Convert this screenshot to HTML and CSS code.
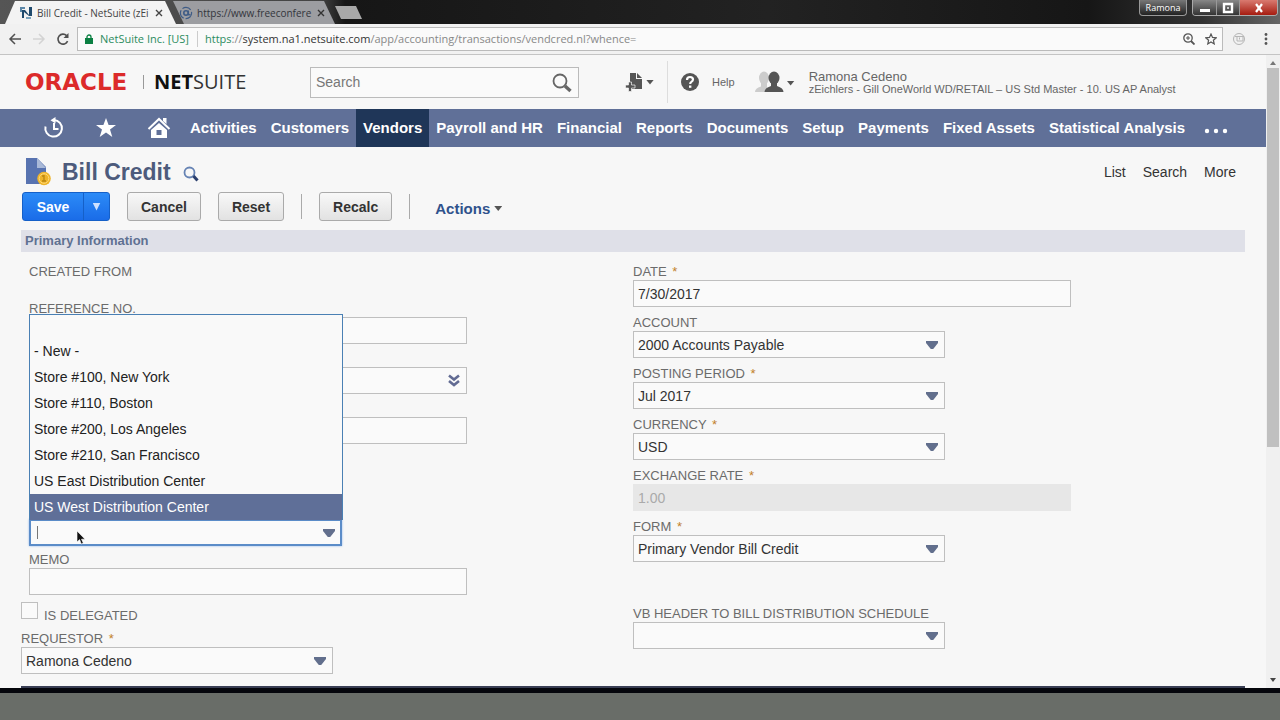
FILE: index.html
```
<!DOCTYPE html>
<html lang="en">
<head>
<meta charset="utf-8">
<title>Bill Credit - NetSuite</title>
<link rel="stylesheet" href="styles.css">
</head>
<body>
<div class="tabstrip">
  <div class="tab tab-active">
    <svg class="favicon" width="14" height="14" viewBox="0 0 14 14"><path fill="#5b87a8" d="M1 1h5v2H3v3H1z"/><path fill="#1f4a6d" d="M3 4h3l4 5V1h3v9h-3L5 6v6H3z"/><path fill="#7ba3bd" d="M7 11h5v2H7z"/></svg>
    <span class="tab-title">Bill Credit - NetSuite (zEi</span>
    <button class="tab-close" aria-label="Close tab"><svg width="8" height="8" viewBox="0 0 8 8"><path d="M1 1l6 6M7 1L1 7" stroke="#444" stroke-width="1.4"/></svg></button>
  </div>
  <div class="tab tab-idle">
    <svg class="favicon" width="14" height="14" viewBox="0 0 14 14" fill="none" stroke="#3e5c86"><circle cx="7" cy="7" r="5.6" stroke-dasharray="9 2" stroke-width="1.2"/><circle cx="7" cy="7" r="2.2" stroke-width="1.6"/><path d="M9.4 4.5v4q1 1 1.8-.5" stroke-width="1.3"/></svg>
    <span class="tab-title">https://www.freeconfere</span>
    <button class="tab-close" aria-label="Close tab"><svg width="8" height="8" viewBox="0 0 8 8"><path d="M1 1l6 6M7 1L1 7" stroke="#333" stroke-width="1.4"/></svg></button>
  </div>
  <button class="new-tab" aria-label="New tab"></button>
  <div class="window-controls">
    <button class="user-chip">Ramona</button>
    <div class="win-group">
      <button class="win-btn" aria-label="Minimize"><svg width="12" height="12" viewBox="0 0 12 12"><path fill="#fff" d="M1 7h10v3H1z"/></svg></button>
      <button class="win-btn" aria-label="Restore"><svg width="12" height="12" viewBox="0 0 12 12"><path d="M2 2h8v8H2z" fill="none" stroke="#fff" stroke-width="2.4"/><path fill="#ccc" d="M5 5h2v2H5z"/></svg></button>
      <button class="win-btn win-close" aria-label="Close"><svg width="12" height="12" viewBox="0 0 12 12"><path d="M3 2l6 8M9 2L3 10" stroke="#fff" stroke-width="2.2"/></svg></button>
    </div>
  </div>
</div>

<div class="toolbar">
  <button class="tool" aria-label="Back"><svg width="14" height="14" viewBox="0 0 14 14" fill="none" stroke="#505050" stroke-width="1.5"><path d="M13 7H2M7 2L2 7l5 5"/></svg></button>
  <button class="tool" aria-label="Forward"><svg width="14" height="14" viewBox="0 0 14 14" fill="none" stroke="#d3d3d3" stroke-width="1.5"><path d="M1 7h11M7 2l5 5-5 5"/></svg></button>
  <button class="tool" aria-label="Reload"><svg width="14" height="14" viewBox="0 0 14 14" fill="none" stroke="#505050" stroke-width="1.6"><path d="M11.6 9.2A5 5 0 1 1 10.6 3.6"/><path fill="#505050" stroke="none" d="M12.5 1v5h-5z"/></svg></button>
  <div class="omnibox">
    <svg width="8" height="11" viewBox="0 0 8 11"><rect y="4" width="8" height="6" fill="#0b8043"/><path d="M2 4.500V3a2 2 0 0 1 4 0v1.500" fill="none" stroke="#0b8043" stroke-width="1.300"/></svg>
    <span class="site">NetSuite Inc. [US]</span>
    <span class="url"><span class="scheme">https</span>://<span class="host">system.na1.netsuite.com</span>/app/accounting/transactions/vendcred.nl?whence=</span>
    <svg width="12" height="12" viewBox="0 0 12 12" fill="none" stroke="#555"><circle cx="5" cy="5" r="4.200" stroke-width="1.300"/><path d="M8 8l3.500 3.500" stroke-width="1.800"/><path d="M3 5h4M5 3v4"/></svg>
    <svg class="bookmark" width="12" height="12" viewBox="0 0 12 12"><path d="M6 1l1.500 3.400 3.700.4-2.800 2.400.8 3.700L6 9l-3.200 1.900.8-3.700L.8 4.800l3.700-.4z" fill="none" stroke="#555" stroke-width="1.200"/></svg>
  </div>
  <svg class="extension" width="14" height="14" viewBox="0 0 14 14" fill="none" stroke="#b5b5b5"><circle cx="7" cy="7" r="5.500"/><path d="M3 4.500h9M5 5v4h6V5M7.500 5.500v2"/></svg>
  <button class="tool" aria-label="Menu"><svg width="4" height="14" viewBox="0 0 4 14" fill="#555"><circle cx="2" cy="2.500" r="1.400"/><circle cx="2" cy="7" r="1.400"/><circle cx="2" cy="11.500" r="1.400"/></svg></button>
</div>

<div class="viewport">
  <div class="page">
    <header class="header">
      <div class="logo"><span class="oracle">ORACLE</span><span class="logo-sep"></span><span class="netsuite"><b>NET</b>SUITE</span></div>
      <div class="search">
        <input type="text" placeholder="Search" aria-label="Search">
        <svg width="22" height="22" viewBox="0 0 22 22" fill="none" stroke="#666"><circle cx="9" cy="9" r="6.500" stroke-width="1.800"/><path d="M14 14l5.500 5" stroke-width="3.400"/></svg>
      </div>
      <button class="create" aria-label="Create new">
        <svg width="18" height="20" viewBox="0 0 18 20" fill="#555"><path d="M5 1h6v6h6v10H5z"/><path d="M12 1l5 5h-5z"/><path d="M3.500 10h3v3H10v3H6.500v3.500h-3V16H.500v-3h3z" stroke="#f7f7f7" stroke-width=".7"/></svg>
        <span class="caret"></span>
      </button>
      <a class="help" href="#">
        <svg width="20" height="20" viewBox="0 0 20 20"><circle cx="10" cy="10" r="9" fill="#555"/><path d="M7 8q0-3 3-3t3 2.600q0 1.400-1.600 2.300-1.200.7-1.200 2" fill="none" stroke="#fff" stroke-width="2.200"/><path fill="#fff" d="M9 13.500h2.400v2.300H9z"/></svg>
        Help
      </a>
      <button class="user">
        <svg width="29" height="22" viewBox="0 0 29 22"><g fill="#ccc"><ellipse cx="9" cy="7" rx="5" ry="6.500"/><path d="M0 21q0-4 6-5.500V11h6v5l3 5z"/></g><g fill="#555"><ellipse cx="19" cy="7" rx="5.500" ry="6.500"/><path d="M9.500 21q0-4 6.500-6v-4h6v4q6.500 2 6.500 6z"/></g></svg>
        <span class="caret"></span>
        <span class="who"><span class="name">Ramona Cedeno</span><span class="role">zEichlers - Gill OneWorld WD/RETAIL – US Std Master - 10. US AP Analyst</span></span>
      </button>
    </header>

    <nav class="nav">
      <a class="nav-icon" href="#" aria-label="Recent"><svg width="22" height="22" viewBox="0 0 22 22" fill="none" stroke="#fff" stroke-width="2"><path d="M2.500 9.500A8.300 8.300 0 1 0 11 3"/><path d="M11 6v6h4.500"/><path fill="#fff" stroke="none" d="M12.500 0v6.500L7.500 3.200z"/></svg></a>
      <a class="nav-icon" href="#" aria-label="Shortcuts"><svg width="22" height="22" viewBox="0 0 22 22"><path fill="#fff" d="M11 1l2.600 7H21l-6 4.500 2.300 7.500L11 15.500 4.700 20 7 12.500 1 8h7.400z"/></svg></a>
      <a class="nav-icon" href="#" aria-label="Home"><svg width="24" height="22" viewBox="0 0 24 22"><path d="M1.500 12L12 2l10.500 10" fill="none" stroke="#fff" stroke-width="2"/><path fill="#fff" d="M16 1h3.500v6L16 4zM12 6l8 7v8H4v-8z"/><path fill="#607098" d="M9.500 13h5v5h-5z"/></svg></a>
      <a href="#">Activities</a><a href="#">Customers</a><a class="current" href="#">Vendors</a><a href="#">Payroll and HR</a><a href="#">Financial</a><a href="#">Reports</a><a href="#">Documents</a><a href="#">Setup</a><a href="#">Payments</a><a href="#">Fixed Assets</a><a href="#">Statistical Analysis</a>
      <a class="more" href="#" aria-label="More tabs"><svg width="24" height="6" viewBox="0 0 24 6" fill="#fff"><circle cx="3" cy="3" r="2.200"/><circle cx="12" cy="3" r="2.200"/><circle cx="21" cy="3" r="2.200"/></svg></a>
    </nav>

    <main class="main">
      <div class="title-row">
        <svg width="27" height="29" viewBox="0 0 27 29"><path fill="#5873b0" d="M1 1h11l9 9v17H1z"/><path fill="#a9b9d8" d="M12 1l9 10h-9z"/><circle cx="19" cy="21.500" r="6.800" fill="#eeb42a"/><circle cx="19" cy="21.500" r="4.800" fill="none" stroke="#ffd978"/><path d="M19 18v6M17 19h2M17 24h4" stroke="#b98512" stroke-width="1.300"/></svg>
        <h1>Bill Credit</h1>
        <svg class="title-search" width="16" height="16" viewBox="0 0 16 16" fill="none"><circle cx="6.500" cy="6.500" r="5" stroke="#6683b4" stroke-width="1.800"/><path d="M10.500 10l4 4.500" stroke="#2b3f6d" stroke-width="3"/></svg>
        <div class="page-links"><a href="#">List</a><a href="#">Search</a><a href="#">More</a></div>
      </div>

      <div class="actions">
        <div class="split"><button class="save">Save</button><button class="save-more" aria-label="More save options"><span class="save-caret"></span></button></div>
        <button class="btn">Cancel</button>
        <button class="btn">Reset</button>
        <span class="rule"></span>
        <button class="btn">Recalc</button>
        <span class="rule"></span>
        <button class="action-menu">Actions <span class="caret"></span></button>
      </div>

      <h2 class="section">Primary Information</h2>

      <form class="form">
        <div class="col-left">
          <div class="group">
            <div class="label created">CREATED FROM</div>
            <div class="field"><label class="label" for="ref">REFERENCE NO.</label><input id="ref" class="box" type="text"></div>
            <div class="field unlabelled picker"><input class="box" type="text" aria-label="Vendor"><svg class="chevrons" width="12" height="13" viewBox="0 0 12 13" fill="none" stroke="#626b93" stroke-width="2.600"><path d="M1 1.500l5 4 5-4M1 7l5 4 5-4"/></svg></div>
            <div class="field unlabelled"><input class="box" type="text" aria-label="Amount"></div>
            <div class="combo">
              <ul class="options" role="listbox">
                <li class="blank" role="option"></li>
                <li role="option">- New -</li>
                <li role="option">Store #100, New York</li>
                <li role="option">Store #110, Boston</li>
                <li role="option">Store #200, Los Angeles</li>
                <li role="option">Store #210, San Francisco</li>
                <li role="option">US East Distribution Center</li>
                <li class="selected" role="option" aria-selected="true">US West Distribution Center</li>
              </ul>
              <div class="arrow"><input class="box focused" type="text" role="combobox" aria-expanded="true" aria-label="Location"></div>
              <span class="text-caret"></span>
              <svg class="pointer" width="10" height="16" viewBox="0 0 10 16"><path d="M1 1v11l2.600-2.400L5.300 14l2-1-1.800-3.800H9z" fill="#111" stroke="#fff" stroke-width=".6"/></svg>
            </div>
            <div class="field"><label class="label" for="memo">MEMO</label><input id="memo" class="box" type="text"></div>
          </div>
          <div class="check"><input id="delegated" type="checkbox"><label class="label" for="delegated">IS DELEGATED</label></div>
          <div class="field narrow"><label class="label" for="req">REQUESTOR <span class="star">*</span></label><div class="arrow"><select id="req" class="box"><option>Ramona Cedeno</option></select></div></div>
        </div>
        <div class="col-right">
          <div class="field"><label class="label" for="date">DATE <span class="star">*</span></label><input id="date" class="box" type="text" value="7/30/2017"></div>
          <div class="field narrow"><label class="label" for="account">ACCOUNT</label><div class="arrow"><select id="account" class="box"><option>2000 Accounts Payable</option></select></div></div>
          <div class="field narrow"><label class="label" for="period">POSTING PERIOD <span class="star">*</span></label><div class="arrow"><select id="period" class="box"><option>Jul 2017</option></select></div></div>
          <div class="field narrow"><label class="label" for="currency">CURRENCY <span class="star">*</span></label><div class="arrow"><select id="currency" class="box"><option>USD</option></select></div></div>
          <div class="field"><label class="label" for="rate">EXCHANGE RATE <span class="star">*</span></label><input id="rate" class="box" type="text" value="1.00" disabled></div>
          <div class="field narrow"><label class="label" for="formtype">FORM <span class="star">*</span></label><div class="arrow"><select id="formtype" class="box"><option>Primary Vendor Bill Credit</option></select></div></div>
          <div class="field narrow schedule"><label class="label" for="schedule">VB HEADER TO BILL DISTRIBUTION SCHEDULE</label><div class="arrow"><select id="schedule" class="box"><option></option></select></div></div>
        </div>
      </form>
      <div class="next-section"></div>
    </main>
  </div>
  <div class="scrollbar"><span class="scroll-up"></span><span class="scroll-thumb"></span><span class="scroll-down"></span></div>
</div>
<footer class="taskbar"></footer>
</body>
</html>
```
FILE: styles.css
```
* { box-sizing: border-box; }
body {
  margin: 0;
  height: 100vh;
  display: flex;
  flex-direction: column;
  overflow: hidden;
  background: #f7f7f7;
  color: #333;
  font: 13px/16px "Liberation Sans", Arial, sans-serif;
}
button, input, select { font: inherit; color: inherit; }
button { margin: 0; padding: 0; border: 0; background: none; }
a { color: inherit; text-decoration: none; }
svg { display: block; flex: none; }
h1, h2, ul { margin: 0; padding: 0; }

.tabstrip {
  flex: none;
  display: flex;
  height: 24px;
  padding-left: 5px;
  background: linear-gradient(90deg, #555 0, #444 320px, #161616 345px, #222 60%, #161616 85%, #333 94%, #666 100%);
  font: 10px/16px "Open Sans", sans-serif;
}
.tab { display: flex; align-items: center; height: 23px; margin-top: 1px; padding: 0 14px; gap: 4px; }
.tab-active { width: 171px; background: #f3f3f3; color: #444; clip-path: polygon(10px 0, 160px 0, 100% 100%, 0 100%); }
.tab-idle { width: 162px; margin-left: -3px; padding: 0 11px 0 6px; background: #9c9da1; color: #33353c; clip-path: polygon(0 0, 151px 0, 100% 100%, 11px 100%); }
.tab-title { flex: 1; white-space: nowrap; }
.tab-close { padding: 2px; }
.new-tab { width: 27px; height: 13px; margin-top: 6px; background: #a8a8a8; clip-path: polygon(0 0, 21px 0, 100% 100%, 6px 100%); }
.window-controls { display: flex; gap: 5px; margin-left: auto; padding-right: 2px; height: 16px; }
.user-chip {
  width: 48px;
  border: 1px solid #999;
  border-top: 0;
  border-radius: 0 0 4px 4px;
  background: linear-gradient(#777, #222);
  color: #fff;
  font-size: 9px;
  line-height: 14px;
}
.win-group { display: flex; border: 1px solid #aaa; border-top: 0; border-radius: 0 0 4px 4px; overflow: hidden; }
.win-btn { display: flex; justify-content: center; align-items: center; width: 23px; background: linear-gradient(#888, #333); }
.win-btn + .win-btn { border-left: 1px solid #999; }
.win-close { width: 38px; background: linear-gradient(#d97a70, #a61c10); }

.toolbar {
  flex: none;
  display: flex;
  align-items: center;
  height: 31px;
  padding: 0 12px 0 8px;
  border-bottom: 1px solid #c4c4c4;
  background: #f1f1f1;
  font: 11px/16px "Open Sans", sans-serif;
}
.tool { margin-right: 10px; }
.toolbar .tool:last-child { margin: 0; }
.omnibox {
  flex: 1;
  display: flex;
  align-items: center;
  height: 24px;
  margin-left: -3px;
  padding: 0 5px 0 7px;
  border: 1px solid #bbb;
  background: #fafafa;
}
.site { margin: 0 7px; padding-right: 8px; border-right: 1px solid #ccc; color: #2c8c5e; }
.url { flex: 1; color: #888; }
.scheme { color: #2c8c5e; }
.host { color: #333; }
.bookmark { margin-left: 10px; }
.extension { margin: 0 18px 0 9px; }

.viewport { flex: 1; min-height: 0; display: flex; }
.page { flex: 1; min-width: 0; overflow: hidden; }
.header { display: flex; align-items: center; height: 54px; padding-left: 25px; color: #666; }
.logo { display: flex; align-items: center; width: 285px; }
.oracle { color: #dc2a2a; font: bold 23px/24px "DejaVu Sans", sans-serif; width: 118px; }
.logo-sep { width: 1px; height: 14px; margin-right: 10px; background: #999; }
.netsuite { font: 20px/24px "Open Sans", sans-serif; color: #333; }
.netsuite b { color: #111; }
.search { position: relative; width: 269px; }
.search input { width: 100%; height: 31px; padding: 0 32px 0 5px; border: 1px solid #bbb; border-radius: 0; background: #fafafa; font-size: 14px; }
.search input::placeholder { color: #777; opacity: 1; }
.search svg { position: absolute; right: 6px; top: 5px; }
.caret { width: 8px; height: 5px; background: #555; clip-path: polygon(0 0, 100% 0, 50% 100%); }
.create { display: flex; align-items: center; gap: 3px; margin-left: 46px; padding-right: 13px; height: 42px; border-right: 1px solid #ddd; }
.help { display: flex; align-items: center; gap: 12px; margin-left: 12px; font-size: 11px; }
.user { display: flex; align-items: center; margin-left: 20px; text-align: left; }
.user .caret { margin: 2px 14px 0 3px; }
.who { display: flex; flex-direction: column; white-space: nowrap; }
.name { font-size: 13px; line-height: 14px; }
.role { font-size: 11px; line-height: 10px; }

.nav { display: flex; align-items: stretch; height: 38px; padding-left: 43px; background: #607098; color: #fff; font-weight: bold; font-size: 15px; line-height: 38px; white-space: nowrap; }
.nav a { padding: 0 7px; }
.nav .nav-icon { display: flex; align-items: center; padding: 0; width: 52px; }
.nav .nav-icon:nth-child(3) { width: 36px; }
.nav .current { background: #1f3658; }
.nav .more { display: flex; align-items: center; padding: 6px 0 0 12px; }

.main { padding: 0 21px; }
.title-row { display: flex; align-items: center; height: 45px; padding: 4px 9px 0 4px; }
h1 { margin-left: 10px; color: #4d5b7c; font-size: 23px; line-height: 28px; }
.title-search { margin: 4px 0 0 12px; }
.page-links { display: flex; gap: 17px; margin-left: auto; font-size: 14px; }
.actions { display: flex; align-items: center; height: 29px; font-weight: bold; font-size: 14px; }
.split { display: flex; height: 29px; border: 1px solid #1560c8; border-radius: 3px; background: linear-gradient(#2c8bf7, #1a6ce8); color: #fff; margin: 0 17px 0 1px; }
.save { width: 60px; }
.save-more { width: 26px; border-left: 1px solid #1560c8; display: flex; justify-content: center; align-items: center; }
.save-caret { width: 8px; height: 8px; background: #cfe2ff; clip-path: polygon(0 0, 100% 0, 50% 100%); }
.btn { height: 29px; padding: 0 13px; margin-right: 17px; border: 1px solid #aaa; border-radius: 3px; background: linear-gradient(#f8f8f8, #e2e2e2); }
.rule { width: 1px; height: 25px; margin-right: 17px; background: #aaa; }
.action-menu { display: flex; align-items: center; gap: 4px; margin: 4px 0 0 8px; color: #2f528c; font-weight: bold; font-size: 15px; }
.section { margin-top: 9px; height: 22px; padding-left: 4px; background: #dfe0e8; color: #5f7192; font-size: 13px; line-height: 22px; }

.form { display: grid; grid-template-columns: 1fr 1fr; }
.label { display: block; height: 16px; color: #6b6b6b; font-size: 13px; line-height: 16px; white-space: nowrap; }
.star { margin-left: 2px; color: #c2812a; }
.box {
  display: block;
  width: 100%;
  height: 27px;
  padding: 0 4px;
  border: 1px solid #bfbfbf;
  border-radius: 0;
  background: #fafafa;
  appearance: none;
  outline: 0;
  font-size: 14px;
}
.box:disabled { background: #e7e7e7; border-color: #e7e7e7; color: #aaa; }
.arrow { position: relative; }
.arrow::after { content: ""; position: absolute; right: 7px; top: 10px; width: 12px; height: 8px; background: #626f8d; clip-path: polygon(0 0, 100% 0, 100% 25%, 60% 100%, 40% 100%, 0 25%); pointer-events: none; }
.col-left { padding-top: 12px; }
.col-right { padding: 12px 0 0; }
.group { padding-left: 8px; }
.field { width: 438px; margin-bottom: 8px; }
.narrow { width: 312px; }
.group .field { margin-bottom: 7px; }
.created { margin-bottom: 21px; }
.unlabelled { padding-top: 16px; }
.picker { position: relative; }
.chevrons { position: absolute; right: 7px; top: 23px; }
.combo { position: relative; width: 313px; margin: 75px 0 6px; }
.focused { border: 2px solid #5b8cc8; box-shadow: 0 0 2px #8fb9ee; }
.options { position: absolute; left: 0; bottom: 26px; z-index: 1; width: 314px; list-style: none; border: 1px solid #4a80b4; border-bottom: 0; background: #f9f9f9; color: #222; font-size: 14px; }
.options li { height: 26px; padding: 0 4px; line-height: 26px; }
.options .blank { height: 23px; }
.options .selected { background: #5f6f98; color: #fff; }
.text-caret { position: absolute; left: 8px; top: 7px; width: 1px; height: 13px; background: #777; }
.pointer { position: absolute; left: 47px; top: 11px; }
.check { display: flex; height: 29px; margin-top: 6px; }
.check input { appearance: none; width: 17px; height: 17px; margin: 0 6px 0 0; border: 1px solid #bfbfbf; background: #fafafa; }
.check .label { margin-top: 6px; }
.schedule { margin-top: 44px; }
.next-section { margin-top: 4px; height: 12px; background: #3a3f55; }

.scrollbar { flex: none; width: 14px; display: flex; flex-direction: column; align-items: center; padding: 6px 0; background: #f0f0f0; }
.scroll-up, .scroll-down { width: 6px; height: 4px; background: #777; clip-path: polygon(50% 0, 100% 100%, 0 100%); }
.scroll-thumb { width: 12px; height: 61%; margin-top: 3px; background: #c0c0c0; }
.scroll-down { margin-top: auto; background: #444; clip-path: polygon(0 0, 100% 0, 50% 100%); }
.taskbar { flex: none; height: 32px; border-top: 5px solid #05060c; background: #696d68; }
```
